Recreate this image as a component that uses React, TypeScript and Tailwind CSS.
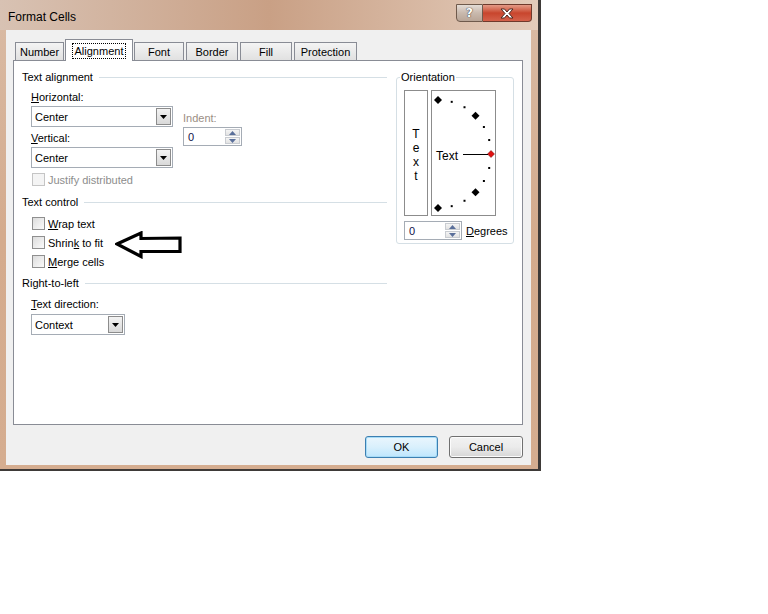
import { FC, ReactNode } from "react";

const font = "font-['Liberation_Sans','Noto_Sans',sans-serif] text-[11px] leading-[16px]";

const Combo: FC<{ w: string; value: string }> = ({ w, value }) => (
  <div className={`flex h-[21px] items-stretch border border-[#a5acb5] bg-white p-[1px] ${w}`}>
    <div className="flex flex-1 items-center pl-[2px] text-black">{value}</div>
    <div className="flex w-[15px] items-center justify-center border border-[#8c8c8c] bg-gradient-to-b from-[#f3f3f3] to-[#d9d9d9]">
      <svg width="7" height="4" viewBox="0 0 7 4"><path d="M0 0h7L3.5 4z" fill="#000" /></svg>
    </div>
  </div>
);

const Spin: FC<{ w: string; value: string }> = ({ w, value }) => (
  <div className={`flex h-[19px] items-stretch border border-[#a5acb5] bg-white p-[1px] ${w}`}>
    <div className="flex flex-1 items-center pl-[3px] text-[#10104a]">{value}</div>
    <div className="flex w-[15px] flex-col gap-[1px]">
      <div className="flex flex-1 items-center justify-center border border-[#c9ccd1] bg-gradient-to-b from-[#f4f4f4] to-[#e3e3e3]">
        <svg width="7" height="4" viewBox="0 0 7 4"><path d="M0 4h7L3.5 0z" fill="#5a6f9a" /></svg>
      </div>
      <div className="flex flex-1 items-center justify-center border border-[#c9ccd1] bg-gradient-to-b from-[#f4f4f4] to-[#e3e3e3]">
        <svg width="7" height="4" viewBox="0 0 7 4"><path d="M0 0h7L3.5 4z" fill="#5a6f9a" /></svg>
      </div>
    </div>
  </div>
);

const Check: FC<{ children: ReactNode; disabled?: boolean }> = ({ children, disabled }) => (
  <div className="flex h-[19px] items-center pl-[10px]">
    <div
      className={
        disabled
          ? "h-[13px] w-[13px] border border-[#c5c5c5] bg-[#f4f4f4]"
          : "h-[13px] w-[13px] border border-[#8f8f8f] bg-gradient-to-br from-[#dcdcdc] to-[#fbfbfb]"
      }
    />
    <span className={disabled ? "ml-[3px] text-[#8d8d8d]" : "ml-[3px] text-black"}>{children}</span>
  </div>
);

const Heading: FC<{ children: ReactNode }> = ({ children }) => (
  <div className="flex h-[16px] items-center">
    <span>{children}</span>
    <div className="ml-[6px] h-px flex-1 bg-[#d5dfe5]" />
  </div>
);

const Tab: FC<{ label: string; w: string; active?: boolean }> = ({ label, w, active }) =>
  active ? (
    <div className={`relative z-10 -mb-px flex h-[22px] items-start justify-center border border-b-0 border-[#898c95] bg-white pt-[3px] ${w}`}>
      <span className="border border-dotted border-black px-[2px] leading-[14px]">{label}</span>
    </div>
  ) : (
    <div className={`flex h-[18px] items-center justify-center border border-b-0 border-[#898c95] bg-gradient-to-b from-[#f4f4f4] to-[#e1e1e1] ${w}`}>
      {label}
    </div>
  );

const Dial: FC = () => {
  const cx = 6;
  const cy = 63;
  const r = 53;
  const ry = 54;
  const pt = (a: number) => [cx + r * Math.cos((a * Math.PI) / 180), cy - ry * Math.sin((a * Math.PI) / 180)];
  const big = [90, 45, -45, -90];
  const small = [75, 60, 30, 15, -15, -30, -60, -75];
  return (
    <svg width="63" height="124" viewBox="0 0 63 124">
      {big.map((a) => {
        const [x, y] = pt(a);
        return <path key={a} d={`M${x} ${y - 4}L${x + 4} ${y}L${x} ${y + 4}L${x - 4} ${y}z`} fill="#000" />;
      })}
      {small.map((a) => {
        const [x, y] = pt(a);
        return <rect key={a} x={x - 1} y={y - 1} width="2" height="2" fill="#000" />;
      })}
      <path d="M59 59.5L62.5 63L59 66.5L55.5 63z" fill="#e01010" stroke="#600" strokeWidth="0.5" />
      <line x1="31" y1="63.5" x2="56" y2="63.5" stroke="#000" strokeWidth="1" />
      <text x="4" y="69" fontSize="12" fontFamily="Liberation Sans, Noto Sans, sans-serif" fill="#000">Text</text>
    </svg>
  );
};

export default function App() {
  return (
    <div className={`h-[614px] w-[768px] bg-white ${font}`}>
      <div className="flex h-[471px] w-[541px] flex-col rounded-tl-[6px] border-r-[3px] border-b-[2px] border-[#3e3a38] bg-gradient-to-b from-[#d9bba5] via-[#d4ab8d] to-[#d5ad90]">
        {/* title bar */}
        <div className="flex h-[30px] items-start justify-between bg-gradient-to-r from-[#d8c2b3] via-[#c9a085] to-[#e3ccbb]">
          <div className="pl-[8px] pt-[9px] text-[12px] text-black">Format Cells</div>
          <div className="mr-[6px] mt-[4px] flex">
            <div className="flex h-[18px] w-[27px] items-center justify-center rounded-bl-[4px] border border-[#6f5a4c] bg-gradient-to-b from-[#e4dcd6] via-[#c9b9ad] to-[#b9a597]">
              <span className="font-['DejaVu_Sans',sans-serif] text-[12px] font-bold leading-none text-white [text-shadow:0_0_1px_#333,0_0_1px_#333]">?</span>
            </div>
            <div className="flex h-[18px] w-[49px] items-center justify-center rounded-br-[4px] border border-l-0 border-[#6f3a2c] bg-gradient-to-b from-[#e39a86] via-[#c8452d] to-[#d4614a]">
              <svg width="14" height="11" viewBox="0 0 14 11">
                <path d="M1 1h3.5L7 4l2.5-3H13L9 5.5 13 10H9.5L7 7l-2.5 3H1l4-4.5z" fill="#fff" stroke="#4a2a22" strokeWidth="1" />
              </svg>
            </div>
          </div>
        </div>
        {/* client area */}
        <div className="ml-[6px] flex h-[435px] w-[525px] flex-col bg-[#f0f0f0] pl-[7px] pt-[9px]">
          <div className="flex h-[21px] items-end gap-[2px] pl-[2px]">
            <Tab label="Number" w="w-[49px]" />
            <div className="-mx-[1px] flex items-end">
              <Tab label="Alignment" w="w-[68px]" active />
            </div>
            <Tab label="Font" w="w-[50px]" />
            <Tab label="Border" w="w-[52px]" />
            <Tab label="Fill" w="w-[52px]" />
            <Tab label="Protection" w="w-[63px]" />
          </div>
          <div className="flex h-[365px] w-[510px] border border-[#898c95] bg-white pl-[8px] pt-[8px]">
            {/* left column */}
            <div className="flex w-[365px] flex-col">
              <Heading>Text alignment</Heading>
              <div className="mt-[4px] flex pl-[9px]">
                <div className="flex w-[142px] flex-col">
                  <div className="h-[16px]"><span className="underline">H</span>orizontal:</div>
                  <div className="mt-px"><Combo w="w-[142px]" value="Center" /></div>
                  <div className="mt-[3px] h-[16px]"><span className="underline">V</span>ertical:</div>
                  <div className="mt-px"><Combo w="w-[142px]" value="Center" /></div>
                </div>
                <div className="ml-[10px] flex flex-col pt-[21px]">
                  <div className="h-[16px] text-[#9b8e84]">Indent:</div>
                  <div className="mt-px"><Spin w="w-[59px]" value="0" /></div>
                </div>
              </div>
              <div className="mt-[2px]">
                <Check disabled>Justify distributed</Check>
              </div>
              <div className="mt-[5px]">
                <Heading>Text control</Heading>
              </div>
              <div className="mt-[4px] flex flex-col">
                <Check><span className="underline">W</span>rap text</Check>
                <div className="relative">
                  <Check>Shrin<span className="underline">k</span> to fit</Check>
                  <svg className="absolute left-[93px] top-[-2px]" width="68" height="28" viewBox="0 0 68 28">
                    <path d="M2 13L26 2V7.5L65 7V20.5L26 20.5V25.5z" fill="none" stroke="#000" strokeWidth="3.2" strokeLinejoin="miter" />
                  </svg>
                </div>
                <Check><span className="underline">M</span>erge cells</Check>
              </div>
              <div className="mt-[4px]">
                <Heading>Right-to-left</Heading>
              </div>
              <div className="mt-[5px] flex flex-col pl-[9px]">
                <div className="h-[16px]"><span className="underline">T</span>ext direction:</div>
                <div className="mt-[2px]"><Combo w="w-[94px]" value="Context" /></div>
              </div>
            </div>
            {/* right column */}
            <fieldset className="ml-[9px] h-[175px] w-[118px] rounded-[3px] border border-[#d5dfe5] pl-[7px] pt-[5px]">
              <legend className="-ml-[4px] px-[1px] leading-[16px]">Orientation</legend>
              <div className="flex gap-[3px]">
                <div className="flex h-[126px] w-[24px] flex-col items-center justify-center border border-[#8c8c8c] pt-[4px] text-[12px] leading-[14px]">
                  <span>T</span>
                  <span>e</span>
                  <span>x</span>
                  <span>t</span>
                </div>
                <div className="h-[126px] w-[65px] border border-[#8c8c8c]">
                  <Dial />
                </div>
              </div>
              <div className="mt-[5px] flex items-center">
                <Spin w="w-[58px]" value="0" />
                <span className="ml-[4px]"><span className="underline">D</span>egrees</span>
              </div>
            </fieldset>
          </div>
          <div className="mt-[11px] flex justify-end gap-[11px] pr-[8px]">
            <div className="flex h-[22px] w-[73px] items-center justify-center rounded-[3px] border border-[#3c7fb1] bg-gradient-to-b from-[#eaf6fd] via-[#d9f0fc] to-[#bee6fd] shadow-[inset_0_0_0_1px_#a8dcf7]">
              OK
            </div>
            <div className="flex h-[22px] w-[74px] items-center justify-center rounded-[3px] border border-[#707070] bg-gradient-to-b from-[#f2f2f2] via-[#ebebeb] to-[#d6d6d6] shadow-[inset_0_0_0_1px_#fcfcfc]">
              Cancel
            </div>
          </div>
        </div>
      </div>
    </div>
  );
}
